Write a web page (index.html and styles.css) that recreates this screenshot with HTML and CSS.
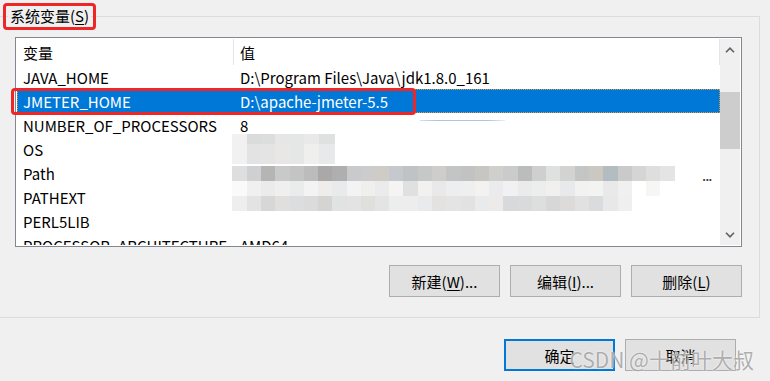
FILE: index.html
```html
<!DOCTYPE html>
<html lang="zh-CN">

<head>
    <meta charset="UTF-8">
    <title>环境变量</title>
    <link rel="stylesheet" href="styles.css">
</head>

<body>

    <div class="dialog">
        <fieldset class="group">
            <legend class="group-title">系统变量(<u>S</u>)</legend>

            <div class="listview">
                <div class="list-main">
                    <div class="list-head">
                        <span class="col-name">变量</span>
                        <span class="col-value">值</span>
                    </div>
                    <div class="row">
                        <span class="col-name">JAVA_HOME</span>
                        <span class="col-value">D:\Program Files\Java\jdk1.8.0_161</span>
                    </div>
                    <div class="row selected">
                        <span class="col-name">JMETER_HOME</span>
                        <span class="col-value">D:\apache-jmeter-5.5</span>
                    </div>
                    <div class="row row-procs">
                        <span class="col-name">NUMBER_OF_PROCESSORS</span>
                        <span class="col-value">8</span>
                    </div>
                    <div class="row">
                        <span class="col-name">OS</span>
                        <span class="col-value"></span>
                    </div>
                    <div class="row">
                        <span class="col-name">Path</span>
                        <span class="col-value"><span class="more">...</span></span>
                    </div>
                    <div class="row">
                        <span class="col-name">PATHEXT</span>
                        <span class="col-value"></span>
                    </div>
                    <div class="row">
                        <span class="col-name">PERL5LIB</span>
                        <span class="col-value"></span>
                    </div>
                    <div class="row">
                        <span class="col-name">PROCESSOR_ARCHITECTURE</span>
                        <span class="col-value">AMD64</span>
                    </div>

                    <!-- blurred values -->
                    <div class="blur blur-os"></div>
                    <div class="blur blur-path1"></div>
                    <div class="blur blur-path2"></div>
                    <div class="blur blur-ext"></div>
                </div>

                <div class="scrollbar">
                    <div class="arrow">
                        <svg width="10" height="6" viewBox="0 0 10 6"><polyline points="1,5.2 5,1.2 9,5.2" /></svg>
                    </div>
                    <div class="track">
                        <div class="thumb"></div>
                    </div>
                    <div class="arrow">
                        <svg width="10" height="6" viewBox="0 0 10 6"><polyline points="1,0.8 5,4.8 9,0.8" /></svg>
                    </div>
                </div>
            </div>

            <div class="actions">
                <button class="btn">新建(<u>W</u>)...</button>
                <button class="btn">编辑(<u>I</u>)...</button>
                <button class="btn">删除(<u>L</u>)</button>
            </div>
        </fieldset>

        <div class="footer">
            <button class="btn btn-default">确定</button>
            <button class="btn">取消</button>
        </div>

        <!-- red annotations -->
        <div class="mark mark-title"></div>
        <div class="mark mark-row"></div>

        <div class="watermark">CSDN @十前叶大叔</div>
    </div>

</body>

</html>
```

FILE: styles.css
```css
body {
    margin: 0;
    padding: 0;
    background: #f0f0f0;
    font-family: 'Noto Sans CJK SC', sans-serif;
    font-size: 15px;
    color: #000;
}

.dialog {
    position: relative;
    width: 770px;
    height: 381px;
    overflow: hidden;
}

/* Group box */
.group {
    margin: 5px 10px 0 -1px;
    padding: 0 17px 20px 0;
    border: 1px solid #dcdcdc;
    border-left: none;
}

.group-title {
    margin-left: 9px;
    padding: 0 2px;
    line-height: 22px;
}

u {
    text-decoration-thickness: 1px;
    text-underline-offset: 2px;
}

/* List view */
.listview {
    display: flex;
    margin: 10px 0 0 16px;
    height: 206px;
    padding: 1px;
    border: 1px solid #828790;
    background: #fff;
    box-sizing: content-box;
}

.list-main {
    position: relative;
    flex: 1;
    overflow: hidden;
}

.list-head,
.row {
    display: grid;
    grid-template-columns: 216px 1fr;
    align-items: center;
    white-space: nowrap;
}

.list-head {
    height: 26px;
}

.list-head .col-value {
    height: 100%;
    display: flex;
    align-items: center;
    border-left: 1px solid #e5e5e5;
    border-right: 1px solid #e5e5e5;
}

.row {
    position: relative;
    height: 24px;
}

.col-name {
    padding-left: 6px;
}

.col-value {
    padding-left: 6px;
}

.row .col-value {
    padding-left: 7px;
}

.row.selected {
    background: #0078d7;
    color: #fff;
    outline: 1px dotted #e59a3a;
    outline-offset: -1px;
}

/* leftover of the blur on the next row */
.row-procs::after {
    content: "";
    position: absolute;
    left: 403px;
    top: 7px;
    width: 85px;
    height: 1px;
    background: linear-gradient(to right, #cfe0f2, #a8c6e6 20%, #a8c6e6 80%, #e4eef8);
}

.more {
    position: relative;
    left: 462px;
    top: 1px;
    letter-spacing: -1px;
    color: #333;
}

/* Pixelated (blurred) values */
.blur {
    position: absolute;
    left: 215px;
    height: 15px;
}

.blur-os {
    top: 95px;
    width: 103px;
    height: 30px;
    background:
        linear-gradient(to right,
            #f1f1f1 0 15px, #dadcdc 15px 29px, #dcdddd 29px 43px, #e7e6e6 43px 58px,
            #e5e6e6 58px 72px, #e9e9e9 72px 87px, #dfe1e1 87px 103px) top / 100% 10px no-repeat,
        linear-gradient(to right,
            #f1f1f1 0 15px, #e3e3e3 15px 29px, #e4e4e4 29px 43px, #e8e7e6 43px 58px,
            #e5e7e6 58px 72px, #efefed 72px 87px, #e8e9ea 87px 103px) bottom / 100% 20px no-repeat;
}

.blur-path1 {
    top: 127px;
    width: 443px;
    background: linear-gradient(to right,
        #dedede 0 15px, #cfd0d1 15px 29px, #b5b5b3 29px 43px, #c8cac9 43px 58px,
        #c3c4c3 58px 72px, #bcbcbc 72px 86px, #aaa8a9 86px 100px, #b0afaf 100px 115px,
        #c8cacc 115px 129px, #cbcccb 129px 143px, #cfccc8 143px 157px, #c5c8cc 157px 171px,
        #c0c3c5 171px 186px, #c6c8c8 186px 200px, #cecdcc 200px 214px, #c3c4c4 214px 229px,
        #c2c2c2 229px 243px, #c8c6c3 243px 257px, #cfcfcc 257px 271px, #cbcbcb 271px 286px,
        #bbbdbc 286px 300px, #cfcfcf 300px 314px, #dfe1e1 314px 328px, #d3d3d1 328px 343px,
        #c4c5c5 343px 357px, #cbc7c1 357px 371px, #b3bcc0 371px 386px, #cacaca 386px 400px,
        #d5d5d5 400px 414px, #dedede 414px 428px, #e4e4e4 428px 443px);
}

.blur-path2 {
    top: 142px;
    width: 443px;
    background: linear-gradient(to right,
        #fafafa 0 15px, #f0f0f0 15px 29px, #ebebeb 29px 43px, #efefef 43px 58px,
        #eaeceb 58px 72px, #f3f3f3 72px 86px, #eeedeb 86px 100px, #e9eaeb 100px 115px,
        #f3f3f3 115px 129px, #efefed 129px 143px, #ebebeb 143px 157px, #f5f4f3 157px 171px,
        #dfe1e0 171px 186px, #f2f1ef 186px 200px, #e9e9e9 200px 214px, #eceeef 214px 229px,
        #eeefef 229px 243px, #f3f2f0 243px 257px, #e9ebed 257px 271px, #f1f1f3 271px 286px,
        #ebebeb 286px 300px, #eceeed 300px 314px, #f1f0ee 314px 328px, #e8e9ea 328px 343px,
        #f2f2f0 343px 357px, #f3f3f2 357px 371px, #e9e9e9 371px 386px, #f0f0f0 386px 400px,
        #fff 400px 414px, #f6f6f5 414px 428px, #fff 428px 443px);
}

.blur-ext {
    top: 157px;
    width: 400px;
    background: linear-gradient(to right,
        #eeeeee 0 15px, #e3e3e3 15px 29px, #d7d7d7 29px 43px, #e0dfdd 43px 58px,
        #dcdddf 58px 72px, #dbdbdb 72px 86px, #d4d4d2 86px 100px, #e1e2e2 100px 115px,
        #e3e3e3 115px 129px, #dfdfdd 129px 143px, #e4e4e4 143px 157px, #eceeed 157px 171px,
        #ededed 171px 186px, #e9eaeb 186px 200px, #e3e2e0 200px 214px, #e4e4e4 214px 229px,
        #e2e2e2 229px 243px, #e8eaeb 243px 257px, #ecebe9 257px 271px, #d8d9db 271px 286px,
        #d9dadb 286px 300px, #dedede 300px 314px, #d7d7d7 314px 328px, #dcdbd9 328px 343px,
        #e1e1e1 343px 357px, #dadbdc 357px 371px, #e8e8e8 371px 386px, #efefef 386px 400px);
}

/* Scroll bar */
.scrollbar {
    display: flex;
    flex-direction: column;
    width: 20px;
    background: #f0f0f0;
}

.arrow {
    height: 21px;
    display: flex;
    align-items: center;
    justify-content: center;
}

.arrow svg {
    fill: none;
    stroke: #606060;
    stroke-width: 1.6;
}

.track {
    flex: 1;
}

.thumb {
    margin-top: 32px;
    height: 57px;
    background: #cdcdcd;
}

/* Buttons */
.actions {
    display: flex;
    justify-content: flex-end;
    gap: 10px;
    margin-top: 18px;
}

.btn {
    width: 111px;
    height: 32px;
    padding: 0;
    border: 1px solid #adadad;
    background: #e1e1e1;
    font-family: inherit;
    font-size: 15px;
    color: #000;
}

.btn-default {
    border: 2px solid #0078d7;
}

.footer {
    display: flex;
    justify-content: flex-end;
    gap: 10px;
    margin: 21px 34px 0 0;
}

/* Annotations */
.mark {
    position: absolute;
    border: 3px solid #ef2626;
    border-radius: 4px;
}

.mark-title {
    left: 3px;
    top: 3px;
    width: 87px;
    height: 21px;
}

.mark-row {
    left: 11px;
    top: 88px;
    width: 399px;
    height: 21px;
}

.watermark {
    position: absolute;
    right: 16px;
    bottom: 7px;
    font-size: 21px;
    color: rgba(150, 150, 150, 0.75);
    text-shadow: 0 0 2px #fff;
}
```
